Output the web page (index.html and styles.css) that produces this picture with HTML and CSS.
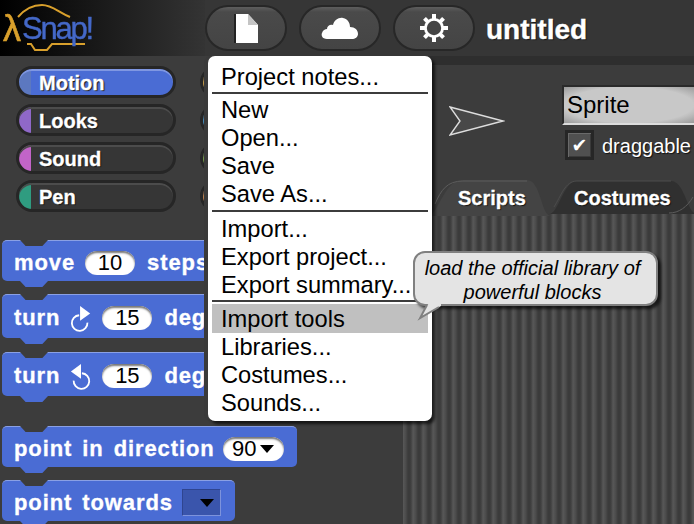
FILE: index.html
```html
<!DOCTYPE html>
<html>
<head>
  <title>Snap!</title>
  <link rel="stylesheet" href="styles.css">
</head>
<body>
  <div class="app">
    <div class="topbar">
      <div class="logo">
        <svg class="logo-path" width="100" height="56" viewBox="0 0 100 56">
          <path d="M18 17 C24 10 32 5 42 5 C52 5 58 12 70 17" fill="none" stroke="#d9a02c" stroke-width="2"/>
          <path d="M27 44 H31 L35 50 H47 L52 44 H85" fill="none" stroke="#d9a02c" stroke-width="2"/>
        </svg>
        <span class="lambda">&lambda;</span><span class="logo-text">Snap!</span>
      </div>
      <button class="top-btn">
        <svg width="26" height="32" viewBox="0 0 26 32">
          <path d="M1 2 H14 V31 H1 Z" fill="#222"/>
          <path d="M3 2 H15 L25 13 V31 H3 Z" fill="#fff"/>
          <path d="M15 2 L25 13 H15 Z" fill="#c4c4c4"/>
        </svg>
      </button>
      <button class="top-btn">
        <svg width="38" height="26" viewBox="0 0 38 26">
          <path d="M6 24 C1 24 0 20 1 18 C2 15 4 14 6 14 C6 11 9 9 12 10 C13 5 18 2 22 3 C27 4 29 8 29 12 C34 12 37 15 37 19 C37 22 34 24 31 24 Z" fill="#fff"/>
        </svg>
      </button>
      <button class="top-btn">
        <svg width="30" height="30" viewBox="-15 -15 30 30">
          <g fill="#fff">
            <rect x="-2" y="-14" width="4" height="28"/>
            <rect x="-14" y="-2" width="28" height="4"/>
            <rect x="-2" y="-13.5" width="4" height="27" transform="rotate(45)"/>
            <rect x="-13.5" y="-2" width="27" height="4" transform="rotate(45)"/>
          </g>
          <circle r="10" fill="#fff"/>
          <circle r="7.2" fill="#444"/>
        </svg>
      </button>
      <div class="project-name">untitled</div>
    </div>

    <div class="workspace">
      <div class="palette">
        <div class="categories">
          <div class="cat cat-motion active">Motion</div>
          <div class="cat cat-control">Control</div>
          <div class="cat cat-looks">Looks</div>
          <div class="cat cat-sensing">Sensing</div>
          <div class="cat cat-sound">Sound</div>
          <div class="cat cat-operators">Operators</div>
          <div class="cat cat-pen">Pen</div>
          <div class="cat cat-variables">Variables</div>
        </div>

        <div class="blocks">
          <div class="block">move <span class="num">10</span> steps</div>
          <div class="block tall">turn
            <svg class="turn-icon" width="22" height="28" viewBox="0 0 24 30">
              <path d="M10 12 A8.5 8.5 0 1 0 19 20" fill="none" stroke="#fff" stroke-width="2"/>
              <path d="M11 2 L22 10 L11 18 Z" fill="#fff"/>
            </svg>
            <span class="num">15</span> degrees</div>
          <div class="block tall">turn
            <svg class="turn-icon" width="22" height="28" viewBox="0 0 24 30">
              <path d="M13 12 A8.5 8.5 0 1 1 4 20" fill="none" stroke="#fff" stroke-width="2"/>
              <path d="M12 2 L1 10 L12 18 Z" fill="#fff"/>
            </svg>
            <span class="num">15</span> degrees</div>
          <div class="block gap-big">point in direction <span class="num num-drop">90<i class="arrow"></i></span></div>
          <div class="block">point towards <span class="slot"><i class="arrow"></i></span></div>
        </div>
      </div>

      <div class="side">
        <div class="band"></div>
        <div class="sprite-panel">
          <svg class="sprite-arrow" width="56" height="30" viewBox="0 0 56 30">
            <path d="M1 1 L54 15 L1 29 L11 15 Z" fill="#484848" stroke="#ddd" stroke-width="1.4"/>
          </svg>
          <div class="sprite-info">
            <div class="sprite-name">Sprite</div>
            <div class="draggable">
              <span class="check">&#10004;</span>
              <span class="check-label">draggable</span>
            </div>
          </div>
        </div>
        <div class="tabs">
          <div class="tab tab-costumes">
            <svg class="tab-shape" width="148" height="34" viewBox="0 0 148 34">
              <path d="M0 34 C10 34 14 1 28 1 H122 C136 1 138 34 148 34 Z" fill="#303030"/>
              <path d="M5 27 C12 16 16 1 28 1 H122" fill="none" stroke="#4c4c4c"/>
              <path d="M144 17 C138 27 130 33 120 33" fill="none" stroke="#5c5c5c"/>
            </svg>
            <span>Costumes</span>
          </div>
          <div class="tab tab-scripts">
            <svg class="tab-shape" width="124" height="36" viewBox="0 0 124 36">
              <path d="M0 36 C12 36 16 0 36 0 H100 C114 0 114 36 124 36 Z" fill="#444"/>
              <path d="M8 24 C14 10 20 1 36 1 H100" fill="none" stroke="#5c5c5c"/>
            </svg>
            <span>Scripts</span>
          </div>
        </div>
        <div class="scripts"></div>
      </div>
    </div>

    <div class="menu">
      <div class="menu-item">Project notes...</div>
      <div class="menu-line"></div>
      <div class="menu-item">New</div>
      <div class="menu-item">Open...</div>
      <div class="menu-item">Save</div>
      <div class="menu-item">Save As...</div>
      <div class="menu-line line-wide"></div>
      <div class="menu-item">Import...</div>
      <div class="menu-item">Export project...</div>
      <div class="menu-item">Export summary...</div>
      <div class="menu-line"></div>
      <div class="menu-item selected">Import tools</div>
      <div class="menu-item">Libraries...</div>
      <div class="menu-item">Costumes...</div>
      <div class="menu-item">Sounds...</div>
    </div>

    <div class="bubble">
      load the official library of<br>powerful blocks
      <svg class="bubble-tail" width="26" height="18" viewBox="0 0 26 18">
        <path d="M12 0 L1 16 L24 3 L24 0 Z" fill="#e4e4e4"/>
        <path d="M10 2 L3 15 L22 4" fill="none" stroke="#808080" stroke-width="2"/>
      </svg>
    </div>
  </div>
</body>
</html>
```

FILE: styles.css
```css
html, body {
  margin: 0;
  padding: 0;
}

body {
  font-family: "Liberation Sans", Arial, sans-serif;
  background: #3c3c3c;
}

.app {
  position: relative;
  width: 694px;
  height: 524px;
  overflow: hidden;
  background: #3c3c3c;
}

/* top bar */

.topbar {
  display: flex;
  align-items: center;
  height: 56px;
  background: #363636;
}

.logo {
  position: relative;
  display: flex;
  align-items: center;
  width: 205px;
  height: 56px;
  padding: 2px 0 0 3px;
  box-sizing: border-box;
  background: linear-gradient(to right, #000 0, #1a1a1a 50%, #343434 100%);
  flex-shrink: 0;
}

.logo-path {
  position: absolute;
  left: 0;
  top: 0;
  filter: blur(0.5px);
}

.lambda {
  position: relative;
  width: 19px;
  color: #d9a02c;
  font-size: 36px;
  -webkit-text-stroke: 0.6px #d9a02c;
  filter: blur(0.5px);
}

.logo-text {
  position: relative;
  color: #4468c8;
  font-size: 31px;
  letter-spacing: -2.2px;
  -webkit-text-stroke: 0.4px #4468c8;
  filter: blur(0.5px);
}

.top-btn {
  display: flex;
  align-items: center;
  justify-content: center;
  width: 82px;
  height: 46px;
  margin-right: 12px;
  padding: 0;
  border: 2px solid #272727;
  border-radius: 23px;
  background: linear-gradient(to bottom, #5e5e5e 0, #4a4a4a 12%, #444 100%);
  flex-shrink: 0;
}

.project-name {
  margin-left: -1px;
  padding-top: 4px;
  color: #fff;
  font-size: 28px;
  font-weight: bold;
  text-shadow: 1px 1px 1px #111;
  -webkit-text-stroke: 0.4px #fff;
}

/* main area */

.workspace {
  display: flex;
  height: 468px;
}

.palette {
  width: 403px;
  padding-top: 10px;
  box-sizing: border-box;
  flex-shrink: 0;
  overflow: hidden;
}

.categories {
  display: grid;
  grid-template-columns: 160px 160px;
  grid-auto-rows: 32px;
  column-gap: 24px;
  row-gap: 6px;
  padding-left: 16px;
}

.cat {
  display: flex;
  align-items: center;
  padding: 3px 0 0 20px;
  border: 3px solid #262626;
  border-radius: 16px;
  box-sizing: border-box;
  color: #fff;
  font-size: 20px;
  font-weight: bold;
  text-shadow: 1px 1px 1px #111;
  -webkit-text-stroke: 0.3px #fff;
  box-shadow: inset 0 2px 0 #4c4c4c;
  background: linear-gradient(to right, var(--tint) 12px, #363636 12px);
}

.cat.active {
  background: linear-gradient(to right, #5c78c0 12px, #4a6cd4 12px);
  box-shadow: inset 0 2px 0 #7f97e2;
}

.cat-motion { --tint: #5c78c0; }
.cat-looks { --tint: #8f68c8; }
.cat-sound { --tint: #c264c8; }
.cat-pen { --tint: #2f9c80; }
.cat-control { --tint: #d9a84c; }
.cat-sensing { --tint: #4a9ad0; }
.cat-operators { --tint: #7fae4f; }
.cat-variables { --tint: #d48c50; }

/* blocks */

.blocks {
  display: flex;
  flex-direction: column;
  align-items: flex-start;
  margin-top: 28px;
  padding-left: 2px;
}

.block {
  position: relative;
  display: flex;
  align-items: center;
  gap: 10px;
  height: 41px;
  margin-bottom: 13px;
  padding: 3px 12px 0;
  box-sizing: border-box;
  border-radius: 5px;
  border-top: 1px solid #8aa0e4;
  background: #4a6cd4;
  color: #fff;
  font-size: 22px;
  font-weight: bold;
  letter-spacing: 0.9px;
  word-spacing: 3px;
  white-space: nowrap;
  -webkit-text-stroke: 0.3px #fff;
}

/* notch on top and bump below */
.block::before,
.block::after {
  content: "";
  position: absolute;
  left: 18px;
  width: 28px;
  height: 6px;
  clip-path: polygon(0 0, 100% 0, 80% 100%, 20% 100%);
}

.block::before {
  top: -1px;
  background: #3c3c3c;
}

.block::after {
  bottom: -6px;
  background: #4a6cd4;
}

.block.tall {
  height: 44px;
  margin-bottom: 14px;
}

.block.gap-big {
  margin-top: 16px;
}

.num {
  display: flex;
  align-items: center;
  justify-content: center;
  min-width: 50px;
  height: 24px;
  margin-right: 2px;
  border-radius: 12px;
  background: #fff;
  box-shadow: inset 0 2px 2px #777;
  color: #000;
  font-size: 22px;
  font-weight: normal;
  letter-spacing: 0;
  -webkit-text-stroke: 0;
}

.num-drop {
  gap: 4px;
  min-width: 61px;
  margin: 0 1px 0 -2px;
}

.arrow {
  display: inline-block;
  width: 0;
  height: 0;
  border-left: 7px solid transparent;
  border-right: 7px solid transparent;
  border-top: 8px solid #000;
}

.slot {
  display: flex;
  align-items: center;
  justify-content: flex-end;
  width: 39px;
  height: 27px;
  margin: 0 2px 0 -1px;
  padding-right: 6px;
  box-sizing: border-box;
  border: 1px solid #7d93dc;
  border-top-color: #2f4590;
  border-left-color: #2f4590;
  background: #3a55ac;
}

/* right side */

.side {
  flex: 1;
  display: flex;
  flex-direction: column;
  min-width: 0;
}

.band {
  height: 9px;
  background: #2e2e2e;
}

.sprite-panel {
  display: flex;
  height: 115px;
  padding-top: 20px;
  box-sizing: border-box;
}

.sprite-arrow {
  margin: 21px 0 0 46px;
  flex-shrink: 0;
}

.sprite-info {
  margin-left: 57px;
  width: 140px;
}

.sprite-name {
  height: 40px;
  line-height: 36px;
  padding-left: 3px;
  box-sizing: border-box;
  border: 2px solid #2a2a2a;
  border-bottom: 2px solid #ddd;
  border-right: none;
  background: radial-gradient(ellipse at 50% 50%, #c8c8c8 70%, #9a9a9a 100%);
  font-size: 24px;
}

.draggable {
  display: flex;
  align-items: center;
  gap: 8px;
  margin: 5px 0 0 3px;
}

.check {
  display: flex;
  align-items: center;
  justify-content: center;
  width: 29px;
  height: 30px;
  box-sizing: border-box;
  border: 3px solid #262626;
  background: #505050;
  box-shadow: inset 1px 1px 0 #6a6a6a, inset -1px -1px 0 #3a3a3a;
  color: #fff;
  font-family: "DejaVu Sans", sans-serif;
  font-size: 19px;
}

.check-label {
  padding-top: 2px;
  color: #fff;
  font-size: 20px;
  text-shadow: 1px 1px 1px #111;
}

.tabs {
  position: relative;
  display: flex;
  flex-direction: row-reverse;
  justify-content: flex-end;
  height: 34px;
  padding-left: 24px;
  box-sizing: border-box;
}

.tab {
  position: relative;
  display: flex;
  align-items: center;
  height: 34px;
  padding-top: 2px;
  box-sizing: border-box;
  color: #fff;
  font-size: 20px;
  font-weight: bold;
  text-shadow: 1px 1px 1px #111;
  -webkit-text-stroke: 0.3px #fff;
  flex-shrink: 0;
}

.tab span {
  position: relative;
}

.tab-shape {
  position: absolute;
  left: 0;
  top: 0;
}

.tab-scripts {
  width: 122px;
  padding-left: 31px;
}

.tab-costumes {
  width: 148px;
  padding-left: 25px;
}

.scripts {
  flex: 1;
  background: repeating-linear-gradient(to right, #585858 0, #4a4a4a 3px, #3b3b3b 5px, #3b3b3b 7px, #4a4a4a 9px, #585858 10px);
}

/* popup menu */

.menu {
  position: absolute;
  left: 208px;
  top: 56px;
  width: 224px;
  height: 365px;
  padding: 7px 4px 0;
  box-sizing: border-box;
  background: #fff;
  border-radius: 7px;
  box-shadow: 3px 3px 3px rgba(0, 0, 0, 0.65), -4px 0 0 #3a3a3a;
  font-size: 23.7px;
}

.menu-item {
  height: 28px;
  line-height: 28px;
  padding-left: 9px;
  color: #000;
  white-space: nowrap;
}

.menu-item.selected {
  height: 29px;
  line-height: 30px;
  background: #c0c0c0;
}

.menu-line {
  height: 2px;
  margin: 1px 0 2px;
  background: #3c3c3c;
}

.menu-line.line-wide {
  margin: 2px 0 3px;
}

/* help bubble */

.bubble {
  position: absolute;
  left: 413px;
  top: 251px;
  width: 245px;
  height: 55px;
  padding: 3px 6px 0 0;
  box-sizing: border-box;
  border: 2px solid #808080;
  border-radius: 12px;
  background: #e4e4e4;
  box-shadow: 3px 3px 3px rgba(0, 0, 0, 0.65);
  color: #000;
  font-size: 20px;
  font-style: italic;
  line-height: 24px;
  text-align: center;
}

.bubble-tail {
  position: absolute;
  left: 2px;
  top: 50px;
}
```
